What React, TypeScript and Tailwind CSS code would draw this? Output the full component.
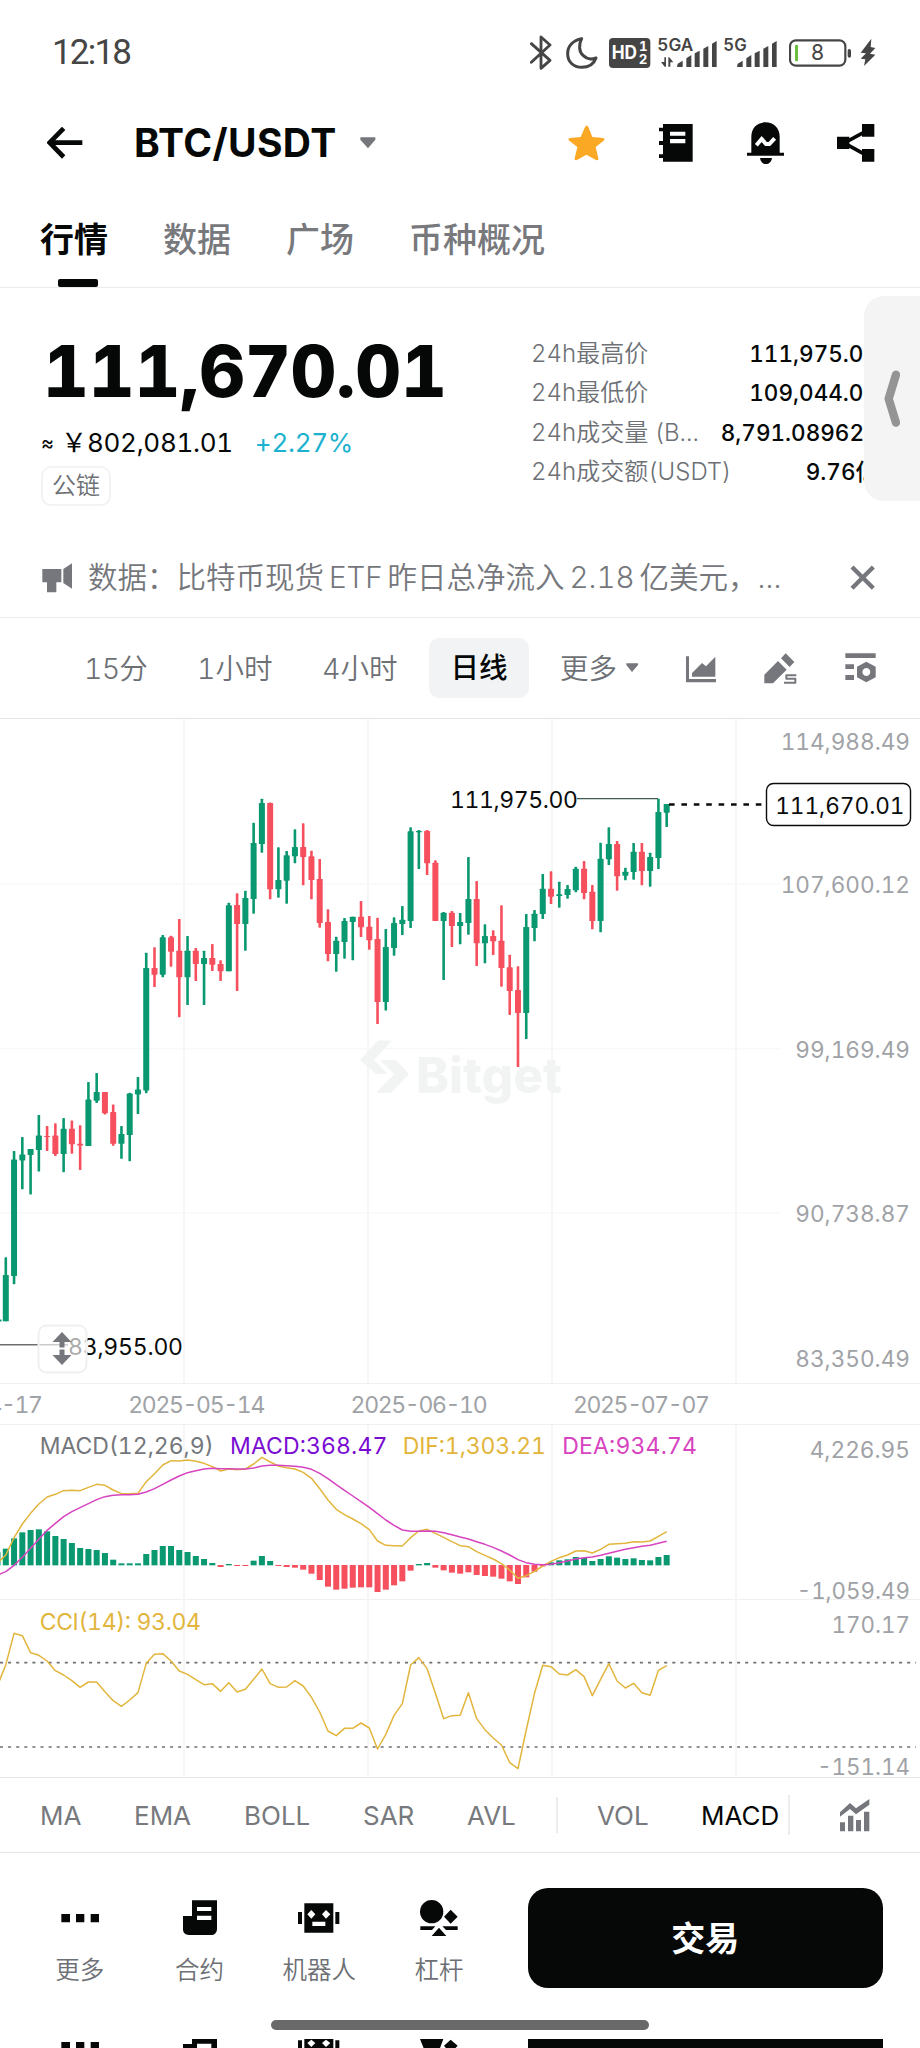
import type { ReactNode } from "react";
import { clsx } from "clsx";

// ---------------------------------------------------------------------------
// Types
// ---------------------------------------------------------------------------

// [up, high, bodyTop, bodyBottom, low] in pane units
type Candle = [number, number, number, number, number];

// ---------------------------------------------------------------------------
// Data
// ---------------------------------------------------------------------------

const FIRST_X = 5.8;
const STEP = 8.261;

const CANDLES: Candle[] = [
  [1, 1257.3, 1275, 1321.3, 1321.3],
  [1, 1150.9, 1159.6, 1275.9, 1284.2],
  [1, 1137.1, 1154.5, 1160.4, 1189.3],
  [1, 1148.9, 1148.9, 1154.9, 1194.4],
  [1, 1114.9, 1135.5, 1150.1, 1171.5],
  [0, 1126, 1135.9, 1137, 1150.9],
  [0, 1123.2, 1135.5, 1154, 1156],
  [1, 1118.1, 1128.8, 1154, 1172.2],
  [0, 1120.4, 1128.8, 1144.2, 1153.7],
  [0, 1125.2, 1143.8, 1145.4, 1169.9],
  [1, 1082.1, 1099.5, 1146.1, 1146.1],
  [1, 1073, 1092, 1100.7, 1103],
  [0, 1092, 1092, 1113.3, 1114.5],
  [0, 1104.6, 1112.1, 1143.8, 1145.8],
  [1, 1126, 1133.9, 1143.8, 1158.8],
  [1, 1092.8, 1093.6, 1135.1, 1161.2],
  [1, 1077, 1089.6, 1094.4, 1114.1],
  [1, 952.7, 968, 1090.4, 1093.2],
  [0, 947.3, 968, 974.7, 987],
  [1, 935, 937.3, 974.7, 977.3],
  [0, 935.7, 937.3, 951.7, 966.7],
  [0, 919, 950.7, 977.3, 1017.2],
  [1, 936, 950.7, 977.3, 1005],
  [0, 948, 950.7, 964, 981],
  [1, 950.7, 958, 964, 1005],
  [0, 944, 958, 964.7, 971],
  [0, 960.3, 964, 971.3, 981],
  [1, 902.7, 905.3, 971.3, 971.3],
  [0, 893.3, 905, 924, 991],
  [1, 890.7, 898, 924, 950.7],
  [1, 822.7, 843, 899, 913.7],
  [1, 798.7, 803, 844, 852.7],
  [0, 802.5, 803, 889.3, 899.3],
  [1, 847.3, 880, 889.3, 897.7],
  [1, 851, 855.3, 880.7, 903.7],
  [1, 829.3, 847, 856.3, 863.3],
  [0, 823.3, 847, 857, 885.3],
  [0, 850.7, 856.3, 880, 899.3],
  [0, 859, 879, 923, 927.7],
  [0, 909.3, 922, 954, 961.3],
  [1, 936.7, 940.7, 954, 971.7],
  [1, 918, 921, 942, 958.7],
  [1, 916.7, 916.7, 922, 960.3],
  [0, 901, 916.7, 927.3, 937],
  [0, 916, 926.7, 940.3, 949.7],
  [0, 917.7, 939, 1002, 1024],
  [1, 929, 947, 1002, 1010.5],
  [1, 917.3, 923, 948, 955.7],
  [1, 906, 919.7, 924, 935],
  [1, 827.3, 831.3, 921, 928],
  [1, 830, 831, 832.3, 869],
  [0, 830, 831, 863.3, 875],
  [0, 860.3, 862.7, 921, 921],
  [1, 912, 912.7, 921, 980],
  [0, 911, 912.7, 926, 947],
  [1, 913, 922, 926, 944.3],
  [1, 857, 899, 923, 934.7],
  [0, 881, 899, 943.3, 966],
  [1, 924.3, 936, 943.3, 963.3],
  [0, 930.3, 936, 941.3, 955],
  [0, 905.3, 940.7, 968, 986.7],
  [0, 954.7, 967.3, 991, 1014.9],
  [0, 966.3, 990, 1012.9, 1067],
  [1, 914, 927, 1012.9, 1039],
  [1, 910, 913.7, 928, 941.3],
  [1, 874, 888.7, 914, 919],
  [0, 871.3, 888.7, 896.7, 904],
  [1, 881.7, 894.3, 896, 907.7],
  [1, 885, 889, 895, 898.7],
  [1, 866.7, 868.7, 890.3, 892.3],
  [0, 861, 868.7, 893, 899.3],
  [0, 885, 891.7, 921, 929.3],
  [1, 842.7, 858.7, 921, 932.3],
  [1, 827.3, 844, 859.3, 865],
  [0, 841, 844, 876.3, 890.7],
  [1, 867.7, 871.7, 875.7, 880.3],
  [1, 843, 851.7, 872, 879.7],
  [0, 843, 851.7, 871, 885.3],
  [1, 852.7, 857, 871, 886.7],
  [1, 798.7, 812, 858, 869],
  [1, 804, 804, 812.7, 827],
];

// Indicator series, three units to a pixel. The first entry sits left of the
// first full candle.
const HIST = [
  547, 536, 505, 487, 480, 478, 484, 498, 507, 519, 534, 537, 540, 549, 569, 580, 580, 580, 552, 540,
  528, 528, 540, 546, 558, 567, 579, 592, 582, 589, 588, 572, 558, 573, 588, 592, 594, 600, 612, 631,
  651, 660, 657, 654, 653, 653, 667, 660, 647, 635, 603, 582, 579, 594, 602, 609, 612, 608, 616, 619,
  621, 627, 635, 643, 623, 606, 590, 577, 571, 568, 561, 564, 573, 567, 559, 563, 567, 565, 570, 571,
  561, 555,
];

const DIF = [
  579, 555, 503, 462, 430, 402, 381, 373, 362, 361, 362, 352, 343, 346, 360, 371, 371, 370, 335, 311,
  285, 272, 273, 270, 274, 280, 290, 303, 297, 299, 297, 282, 262, 276, 288, 293, 297, 307, 325, 356,
  390, 418, 434, 447, 461, 479, 513, 526, 527, 528, 503, 483, 478, 490, 502, 515, 527, 530, 545, 556,
  567, 581, 600, 625, 617, 604, 588, 574, 563, 555, 543, 542, 549, 538, 523, 521, 520, 515, 516, 513,
  499, 485,
];

const DEA = [
  615, 605, 586, 562, 535, 508, 481, 460, 440, 425, 413, 401, 389, 380, 376, 374, 374, 373, 366, 356,
  343, 330, 318, 308, 302, 297, 295, 296, 296, 297, 297, 294, 288, 286, 286, 287, 289, 292, 298, 310,
  326, 344, 361, 378, 395, 412, 431, 450, 466, 480, 484, 484, 483, 484, 488, 494, 501, 507, 515, 523,
  532, 543, 555, 569, 578, 583, 584, 583, 578, 573, 567, 563, 561, 556, 550, 544, 538, 533, 529, 526,
  520, 514,
];

const CCI = [
  947, 884, 790, 797, 848, 856, 873, 902, 915, 932, 952, 936, 936, 965, 992, 1009, 990, 968, 880, 853,
  851, 873, 903, 913, 929, 944, 941, 964, 938, 966, 958, 928, 897, 941, 952, 951, 932, 948, 982, 1026,
  1083, 1097, 1075, 1075, 1059, 1074, 1137, 1093, 1036, 1001, 885, 863, 896, 970, 1046, 1037, 1036, 968,
  1046, 1079, 1104, 1125, 1178, 1196, 1080, 970, 886, 890, 912, 915, 899, 920, 977, 928, 881, 933, 954,
  940, 968, 976, 901, 887,
];

const GRID_X = [184, 368, 552, 736];

const STATS = [
  { label: "24h最高价", value: "111,975.00" },
  { label: "24h最低价", value: "109,044.00" },
  { label: "24h成交量 (B...", value: "8,791.08962", pad: true },
  { label: "24h成交额(USDT)", value: "9.76亿" },
];

const GREEN = "#0a9870";
const RED = "#f6505f";
const YELLOW = "#e2b53c";
const PINK = "#d743c0";

function toPoints(series: number[]) {
  return series.map((v, i) => `${((FIRST_X + (i - 1) * STEP) * 3).toFixed(1)},${v}`).join(" ");
}

// ---------------------------------------------------------------------------
// Icons
// ---------------------------------------------------------------------------

function Svg({ w, h, box, className, children }: { w: number; h: number; box?: string; className?: string; children: ReactNode }) {
  return (
    <svg width={w} height={h} viewBox={box ?? `0 0 ${w * 3} ${h * 3}`} className={clsx("shrink-0", className)}>
      {children}
    </svg>
  );
}

function StatusIcons() {
  return (
    <div className="flex items-center">
      <Svg w={22} h={36}>
        <path d="M4 26 L60 76 L33 100 V6 L60 30 L4 82" fill="none" stroke="#454545" strokeWidth="8.5" strokeLinejoin="round" strokeLinecap="round" />
      </Svg>
      <Svg w={32} h={32} className="ml-[14px]">
        <path d="M47 5 C22 10 5 26 5 50 C5 74 22 91 47 91 C68 91 84 80 90 63 C78 68 62 66 52 56 C38 44 38 22 47 5 Z" fill="none" stroke="#454545" strokeWidth="9" strokeLinejoin="round" />
      </Svg>
      <Svg w={42} h={30} className="ml-[11px]">
        <rect x="0" y="0" width="124" height="90" rx="12" fill="#454545" />
        <g fill="#fff" fontFamily="Inter, sans-serif" fontWeight="700">
          <text x="8" y="64" fontSize="55" textLength="76" lengthAdjust="spacingAndGlyphs">HD</text>
          <text x="90" y="39" fontSize="40">1</text>
          <text x="89" y="79" fontSize="40">2</text>
        </g>
      </Svg>
      <Svg w={120} h={30} className="ml-[6px]">
        <g fill="#454545">
          <g fontSize="51" fontWeight="600" fontFamily="Inter, sans-serif">
            <text x="1" y="38" textLength="108" lengthAdjust="spacingAndGlyphs">5GA</text>
            <text x="199" y="38" textLength="70" lengthAdjust="spacingAndGlyphs">5G</text>
          </g>
          <path d="M12 72 L22 72 V58 H27 V86 H23 Z" />
          <path d="M34 58 H37 L49 73 H40 V86 H34 Z" />
          {[0, 180].map((dx) => (
            <g key={dx} transform={`translate(${dx} 0)`}>
              <path d="M60 87 L62 77 L77 68 V87 Z" />
              <path d="M88 87 V61 L103 51 V87 Z" />
              <path d="M113 87 V46 L128 38 V87 Z" />
              <path d="M139 87 V32 L154 24 V87 Z" />
              <path d="M165 87 V17 L179 9 V87 Z" />
            </g>
          ))}
        </g>
      </Svg>
      <Svg w={63} h={30} className="ml-[12px]">
        <rect x="3" y="7" width="166" height="76" rx="18" fill="none" stroke="#454545" strokeWidth="6.5" />
        <rect x="18" y="20" width="9" height="50" rx="3" fill="#6abf3f" />
        <rect x="176" y="33" width="10" height="26" rx="5" fill="#454545" />
        <text x="86" y="67" textAnchor="middle" fontSize="63" fill="#454545" fontFamily="Inter, sans-serif">8</text>
      </Svg>
      <Svg w={16} h={30} className="ml-[8px]">
        <path d="M34 2 L2 44 L18 46 L2 62 L16 64 L12 84 L46 50 L30 47 L46 30 L32 27 Z" fill="#454545" />
      </Svg>
    </div>
  );
}

function HeaderIcons() {
  return (
    <div className="flex items-center">
      <Svg w={37} h={36}>
        <path d="M55 2 C57 0 60 3 61 6 L73 36 L105 39 C111 40 111 44 107 47 L83 66 L91 100 C92 105 89 107 84 105 L55 89 L27 105 C22 107 19 105 20 100 L28 66 L4 47 C0 44 0 40 6 39 L38 36 L51 6 Z" fill="#fba825" />
      </Svg>
      <Svg w={34} h={38} className="ml-[54px]">
        <path fillRule="evenodd" fill="#050807" d="M12 0 H101 V113 H12 V102 H0 V91 H12 V63 H0 V51 H12 V22 H0 V11 H12 Z M33 23 V35 H79 V23 Z M33 45 V58 H79 V45 Z" />
      </Svg>
      <Svg w={38} h={43} className="ml-[54px]">
        <path fill="#050807" d="M13 92 V44 C13 16 32 1 55 1 C80 1 98 18 98 44 V92 H111 V101 H0 V92 Z M39 108 H75 C73 121 66 126 57 126 C48 126 41 121 39 108 Z" />
        <path d="M28 68 L44 49 L57 64 L67 64 L83 47" transform="translate(0 2)" fill="none" stroke="#fff" strokeWidth="12" />
      </Svg>
      <Svg w={38} h={38} className="ml-[52px]">
        <path d="M90 20 L22 57 L90 95" fill="none" stroke="#050807" strokeWidth="11" />
        <path fill="#050807" d="M0 38 H37 V75 H0 Z M75 0 H112 V38 H75 Z M75 75 H112 V113 H75 Z" />
      </Svg>
    </div>
  );
}

const NAV_ITEMS = [
  {
    label: "更多",
    icon: <path d="M7 42 H33 V67 H7 Z M51 42 H76 V67 H51 Z M95 42 H120 V67 H95 Z" />,
  },
  {
    label: "合约",
    icon: (
      <path
        fillRule="evenodd"
        d="M39 1 H114 V86 C114 98 106 105 96 105 H30 C18 105 12 98 12 88 V48 H39 Z M54 21 V33 H97 V21 Z M54 47 V60 H97 V47 Z"
      />
    ),
  },
  {
    label: "机器人",
    icon: (
      <path
        fillRule="evenodd"
        d="M0 36 H12 V72 H0 Z M112 36 H124 V72 H112 Z M19 10 H106 V98 H19 Z M40 30 L52 43 L40 56 L28 43 Z M84 30 L97 43 L84 56 L72 43 Z M43 65 V78 H82 V65 Z"
      />
    ),
  },
  {
    label: "杠杆",
    icon: (
      <>
        <circle cx="41" cy="35" r="35" />
        <path d="M98 29 L119 50 L98 71 L78 50 Z M7 79 H52 L42 90 H7 Z M73 79 H119 V90 H84 Z M63 83 L85 108 H41 Z" />
      </>
    ),
  },
];

// ---------------------------------------------------------------------------
// Chart
// ---------------------------------------------------------------------------

function AxisLabel({ y, children }: { y: number; children: string }) {
  return (
    <text x="910" y={y} textAnchor="end" fontSize="22.6" fill="#9fa2a6">
      {children}
    </text>
  );
}

function PricePane() {
  return (
    <svg width="920" height="664" viewBox="0 719 920 664" className="block">
      {GRID_X.map((x) => (
        <path key={x} d={`M${x} 719 V1383`} stroke="#f6f6f7" strokeWidth="2" />
      ))}
      {[884, 1048.5, 1213].map((y) => (
        <path key={y} d={`M0 ${y} H780`} stroke="#f8f8f9" strokeWidth="1.5" />
      ))}

      {/* Watermark */}
      <g fill="#f2f4f4">
        <path d="M378 1040.5 H392 L374 1060 L388 1074 H376 L360 1060 Z" />
        <path d="M380 1060 H396 L409 1074 L391 1093 H376 L394 1074 Z" />
        <text x="416" y="1092.5" fontSize="49" fontWeight="800" textLength="146" lengthAdjust="spacingAndGlyphs">
          Bitget
        </text>
      </g>

      <path d="M0 1320.5 H1.5" stroke={GREEN} strokeWidth="2" />
      {CANDLES.map(([up, high, top, bottom, low], i) => {
        const x = FIRST_X + i * STEP;
        const fill = up ? GREEN : RED;
        return (
          <g key={i} fill={fill}>
            <rect x={x - 1.3} y={high} width="2.6" height={low - high} rx="0.6" />
            <rect x={x - 3} y={top} width="6" height={bottom - top} rx="0.6" />
          </g>
        );
      })}

      {/* High / low markers */}
      <path d="M577 798.7 H658" stroke="#3f5a4f" strokeWidth="1.2" />
      <text x="450" y="808" fontSize="23" fill="#0a0c0b" textLength="128">111,975.00</text>
      <path d="M0 1344.8 H68" stroke="#6b6e70" strokeWidth="1.6" />
      <text x="68" y="1354.5" fontSize="23" fill="#0a0c0b" textLength="115">83,955.00</text>

      {/* Pane resize handle */}
      <rect x="38.5" y="1325.5" width="48" height="47" rx="8" fill="#fff" fillOpacity="0.65" stroke="#f0f0f0" strokeWidth="2" />
      <path d="M62 1332 L71.5 1342 H64.5 V1347.5 H59.5 V1342 H52.5 Z M59.5 1349.5 H64.5 V1355 H71.5 L62 1365 L52.5 1355 H59.5 Z" fill="#75777c" />

      <AxisLabel y={749.5}>114,988.49</AxisLabel>
      <AxisLabel y={893}>107,600.12</AxisLabel>
      <AxisLabel y={1058}>99,169.49</AxisLabel>
      <AxisLabel y={1222}>90,738.87</AxisLabel>
      <AxisLabel y={1366.5}>83,350.49</AxisLabel>

      {/* Last price */}
      <path d="M669 804.5 H766" stroke="#0a0c0b" strokeWidth="2.6" strokeDasharray="5.6 6.8" />
      <rect x="766.5" y="783.5" width="144" height="42" rx="7" fill="#fff" stroke="#0a0c0b" strokeWidth="1.4" />
      <text x="904.5" y="813.7" textAnchor="end" fontSize="22.6" fill="#0a0c0b">111,670.01</text>
    </svg>
  );
}

function DateAxis() {
  return (
    <svg width="920" height="41" viewBox="0 1384 920 40" className="block border-t border-[#f0f0f0]">
      {["2025-04-17", "2025-05-14", "2025-06-10", "2025-07-07"].map((date, i) => (
        <text key={date} x={-25.5 + i * 222.3} y="1413" textAnchor="middle" fontSize="23" fill="#9fa2a6" textLength="137">
          {date}
        </text>
      ))}
    </svg>
  );
}

function MacdPane() {
  return (
    <svg width="920" height="175" viewBox="0 165 2760 522" className="block border-t border-[#f0f0f0]">
      {GRID_X.map((x) => (
        <path key={x} d={`M${x * 3} 162 V687`} stroke="#f6f6f7" strokeWidth="6" />
      ))}
      {HIST.map((v, i) => (
        <rect
          key={i}
          x={(FIRST_X + (i - 1) * STEP) * 3 - 9}
          y={Math.min(v, 585)}
          width="18"
          height={Math.max(Math.abs(v - 586), 3)}
          fill={v < 586 ? GREEN : RED}
        />
      ))}
      <polyline points={toPoints(DIF)} fill="none" stroke={YELLOW} strokeWidth="4.5" strokeLinejoin="round" />
      <polyline points={toPoints(DEA)} fill="none" stroke={PINK} strokeWidth="4.5" strokeLinejoin="round" />
      <g fontSize="69">
        <text x="119" y="251" fill="#74777b" textLength="522">MACD(12,26,9)</text>
        <text x="690" y="251" fill="#7a0cd2" textLength="472">MACD:368.47</text>
        <text x="1208" y="251" fill={YELLOW} textLength="430">DIF:1,303.21</text>
        <text x="1687" y="251" fill={PINK} textLength="404">DEA:934.74</text>
        <text x="2730" y="263" textAnchor="end" fill="#9fa2a6" fontSize="68">4,226.95</text>
      </g>
    </svg>
  );
}

function CciPane() {
  return (
    <svg width="920" height="178" viewBox="0 690 2760 531" className="block overflow-visible border-t border-[#f0f0f0]">
      {GRID_X.map((x) => (
        <path key={x} d={`M${x * 3} 687 V1218`} stroke="#f6f6f7" strokeWidth="6" />
      ))}
      {[878, 1131].map((y) => (
        <path key={y} d={`M0 ${y} H2748`} stroke="#6d6f73" strokeWidth="5" strokeDasharray="9 15.3" />
      ))}
      <polyline points={toPoints(CCI)} fill="none" stroke={YELLOW} strokeWidth="4.5" strokeLinejoin="round" />
      <g fontSize="69">
        <text x="119" y="779" fill={YELLOW} textLength="484">CCI(14): 93.04</text>
        <g fill="#9fa2a6" textAnchor="end" fontSize="67">
          <text x="2730" y="687">-1,059.49</text>
          <text x="2730" y="789">170.17</text>
          <text x="2730" y="1214">-151.14</text>
        </g>
      </g>
    </svg>
  );
}

// ---------------------------------------------------------------------------
// Page
// ---------------------------------------------------------------------------

export default function App() {
  return (
    <div className="h-[2048px] w-[920px] overflow-hidden bg-white font-['Inter','Noto_Sans_CJK_SC',sans-serif] text-[#050807] tabular-nums">
      {/* Status bar */}
      <div className="flex h-[106px] items-center justify-between pr-[44px] pl-[52px]">
        <span className="font-[Roboto,sans-serif] text-[35px] tracking-[-1.8px] text-[#454545]">12:18</span>
        <StatusIcons />
      </div>

      {/* Title bar */}
      <header className="flex h-[74px] items-center pr-[45px] pl-[47px]">
        <Svg w={36} h={32}>
          <path d="M50 4 L8 47 L50 90 M8 47 H106" fill="none" stroke="#050807" strokeWidth="14" />
        </Svg>
        <h1 className="ml-[51px] text-[39px] font-bold tracking-[0.4px]">BTC/USDT</h1>
        <Svg w={16} h={12} className="ml-[23px]">
          <path d="M1 1 H46 V8 L24 34 L1 8 Z" fill="#75777c" />
        </Svg>
        <div className="ml-auto">
          <HeaderIcons />
        </div>
      </header>

      {/* Tabs */}
      <nav className="flex h-[108px] gap-[55px] border-b border-[#ebebeb] pl-[40px] text-[34px] font-medium text-[#77797d]">
        <div className="flex flex-col items-center justify-between font-bold text-[#050807]">
          <span className="mt-[35px] leading-[50px]">行情</span>
          <span className="ml-[7px] h-[8px] w-[40px] rounded-[2px] bg-[#050807]" />
        </div>
        <span className="mt-[35px] leading-[50px]">数据</span>
        <span className="mt-[35px] leading-[50px]">广场</span>
        <span className="mt-[35px] leading-[50px]">币种概况</span>
      </nav>

      {/* Quote */}
      <section className="relative flex h-[250px] justify-between">
        <div className="flex flex-col pl-[41px]">
          <span className="mt-[40px] ml-[2px] text-[71px] leading-[86px] font-extrabold tracking-[-0.1px]">111,670.01</span>
          <div className="mt-[11px] flex items-center text-[26px] leading-[36px] tracking-[-0.3px]">
            <span className="w-[20px] text-[20px]">≈</span>
            <span className="w-[26px]">￥</span>
            <span>802,081.01</span>
            <span className="ml-[22px] text-[#1cb2cf]">+2.27%</span>
          </div>
          <span className="mt-[5px] flex h-[40px] w-[70px] items-center justify-center rounded-[10px] border-2 border-[#f3f3f3] text-[24px] font-[350] text-[#6d7075]">
            公链
          </span>
        </div>
        <dl className="mt-[46px] mr-[42px] flex w-[347px] flex-col text-[24px]">
          {STATS.map((s) => (
            <div key={s.label} className="flex h-[39.5px] items-center justify-between whitespace-nowrap">
              <dt className="font-[350] text-[#6d7075]">{s.label}</dt>
              <dd className={clsx("text-[22.5px] font-medium", s.pad && "mr-[14px]")}>{s.value}</dd>
            </div>
          ))}
        </dl>

        {/* Side drawer handle over the stats */}
        <div className="absolute top-[8px] right-0 flex h-[205px] w-[56px] items-center justify-center rounded-l-[20px] bg-[#f4f4f4]">
          <Svg w={16} h={58}>
            <path d="M36 14 L14 86 L36 158" fill="none" stroke="#949494" strokeWidth="25" strokeLinecap="round" strokeLinejoin="round" />
          </Svg>
        </div>
      </section>

      {/* Notice */}
      <section className="flex h-[80px] items-center border-b border-[#ebebeb] pr-[44px] pl-[42px] text-[#75777c]">
        <Svg w={31} h={30}>
          <path d="M1 18 H58 V58 H43 V88 H15 V58 H1 Z M64 18 L90 1 V77 L64 60 Z" fill="#75777c" />
        </Svg>
        <p className="ml-[15px] text-[29.5px] font-[350] [word-spacing:-3px] whitespace-nowrap">
          数据：比特币现货 ETF 昨日总净流入 2.18 亿美元，...
        </p>
        <Svg w={26} h={25} className="ml-auto">
          <path d="M6 6 L70 70 M70 6 L6 70" stroke="#75777c" strokeWidth="13" />
        </Svg>
      </section>

      {/* Timeframes */}
      <section className="flex h-[101px] items-center border-b border-[#e4e4e6] pr-[44px] pl-[84px] text-[28.5px] font-[350] text-[#6d7075]">
        <span className="w-[113px] pt-[2px] tracking-[-0.8px]">15分</span>
        <span className="w-[125px] pt-[2px]">1小时</span>
        <span className="w-[107px] pt-[2px]">4小时</span>
        <span className="flex h-[60px] w-[100px] items-center justify-center rounded-[10px] bg-[#f2f3f5] pt-[1px] font-medium text-[#050807]">
          日线
        </span>
        <span className="ml-[31px] pt-[2px]">更多</span>
        <Svg w={13} h={10} className="ml-[9px]">
          <path d="M1 1 H36 V6 L18 27 L1 6 Z" fill="#75777c" />
        </Svg>
        <div className="ml-auto flex items-center">
          <Svg w={31} h={30}>
            <path d="M0 10 H9 V78 H90 V88 H0 Z M18 71 V60 L48 30 L60 40 L88 11 V71 Z" fill="#75777c" />
          </Svg>
          <Svg w={34} h={33} className="ml-[47px]">
            <path d="M1 94 V68 L42 27 L68 53 L27 94 Z M51 19 L65 4 L91 30 L77 45 Z" fill="#75777c" />
            <path d="M97 70 H67 V80 H94 V92 H60" fill="none" stroke="#75777c" strokeWidth="6" strokeLinejoin="round" />
          </Svg>
          <Svg w={31} h={30} className="ml-[47px]">
            <path
              fillRule="evenodd"
              fill="#75777c"
              d="M1 1 H92 V15 H1 Z M1 34 H27 V48 H1 Z M1 66 H27 V81 H1 Z M64 26 L92 41 V73 L64 88 L36 73 V41 Z M64 45 A12 12 0 1 0 64.1 45 Z"
            />
          </Svg>
        </div>
      </section>

      {/* Chart panes */}
      <section className="font-[Inter,sans-serif]">
        <PricePane />
        <DateAxis />
        <MacdPane />
        <CciPane />
      </section>

      {/* Indicator picker */}
      <section className="flex h-[76px] items-center border-y border-[#e6e6e8] pl-[40px] text-[26px] text-[#77797d]">
        <span className="w-[94px] pt-[1px]">MA</span>
        <span className="w-[110px] pt-[1px]">EMA</span>
        <span className="w-[119px] pt-[1px]">BOLL</span>
        <span className="w-[104px] pt-[1px]">SAR</span>
        <span className="w-[89px] pt-[1px]">AVL</span>
        <span className="h-[36px] w-[2px] bg-[#ededee]" />
        <span className="ml-[39px] w-[104px] pt-[1px]">VOL</span>
        <span className="w-[87px] pt-[1px] text-[#050807]">MACD</span>
        <span className="h-[40px] w-[2px] bg-[#ededee]" />
        <Svg w={30} h={33} className="ml-[50px]">
          <path d="M0 40 L30 12 L48 28 L88 0 V17 L48 46 L30 30 L0 53 Z M0 70 H15 V97 H0 Z M24 50 H40 V97 H24 Z M48 63 H63 V97 H48 Z M72 38 H88 V97 H72 Z" fill="#75777c" />
        </Svg>
      </section>

      {/* Bottom bar */}
      <footer className="relative flex h-[186px] pt-[35px]">
        <div className="ml-[20px] flex">
          {NAV_ITEMS.map((item) => (
            <div key={item.label} className="flex w-[119.7px] flex-col items-center pt-[12px]">
              <Svg w={42} h={36}>
                <g fill="#050807">{item.icon}</g>
              </Svg>
              <span className="mt-[16px] text-[24.5px] leading-[36px] font-[350] text-[#6d7075]">{item.label}</span>
            </div>
          ))}
        </div>
        <button className="ml-[29px] h-[100px] w-[355px] rounded-[20px] bg-[#050807] text-[34px] font-bold text-white">
          交易
        </button>
        <span className="absolute top-[167px] left-[271px] h-[10px] w-[378px] rounded-full bg-[#696969]" />
      </footer>

      {/* Repeated edge of the bar under the gesture area */}
      <div className="flex h-[10px] overflow-hidden">
        <div className="ml-[20px] flex">
          <div className="flex w-[119.7px] justify-center pt-[3px]">
            <Svg w={42} h={7} box="0 42 126 21">
              <g fill="#050807">{NAV_ITEMS[0].icon}</g>
            </Svg>
          </div>
          <div className="flex w-[119.7px] justify-center">
            <Svg w={42} h={10}>
              <path d="M39 0 H114 V30 H97 V14 H54 V30 H12 V15 H39 Z" fill="#050807" />
            </Svg>
          </div>
          <div className="flex w-[119.7px] justify-center">
            <Svg w={42} h={10}>
              <path fillRule="evenodd" d="M0 4 H12 V30 H0 Z M112 4 H124 V30 H112 Z M19 0 H106 V30 H19 Z M40 2 L52 12 L40 24 L28 12 Z M84 2 L97 12 L84 24 L72 12 Z" fill="#050807" />
            </Svg>
          </div>
          <div className="flex w-[119.7px] justify-center">
            <Svg w={42} h={10}>
              <path d="M6 0 H76 L65 30 H18 Z M98 2 L119 20 L110 30 H86 L78 20 Z" fill="#050807" />
            </Svg>
          </div>
        </div>
        <div className="ml-[29px] w-[355px] bg-[#050807]" />
      </div>
    </div>
  );
}
